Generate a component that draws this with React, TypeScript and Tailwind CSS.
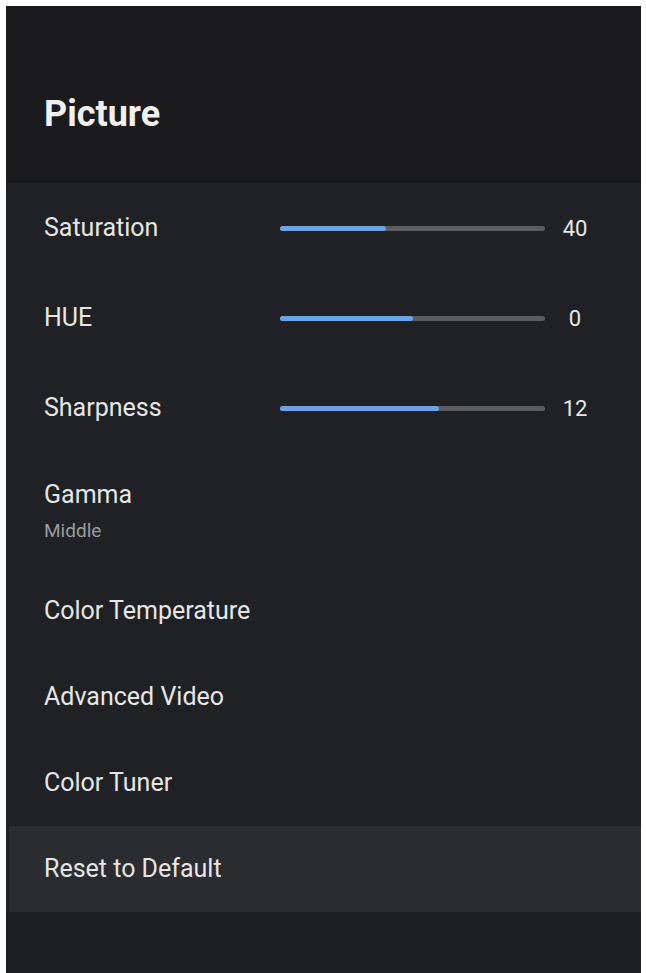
const sliders = [
  { label: 'Saturation', value: '40', fill: 40 },
  { label: 'HUE', value: '0', fill: 50 },
  { label: 'Sharpness', value: '12', fill: 60 },
];

const items = ['Color Temperature', 'Advanced Video', 'Color Tuner'];

function SliderRow({ label, value, fill }: { label: string; value: string; fill: number }) {
  return (
    <div className="flex h-[90px] items-center pl-[38px]">
      <span className="w-[236px] text-[25px] text-[#e6e6e6]">{label}</span>
      <div className="h-[5px] w-[265px] rounded-full bg-[#5a5c5f]">
        <div className="h-full rounded-full bg-[#6aa3e6]" style={{ width: `${fill}%` }} />
      </div>
      <span className="w-[60px] text-center text-[22px] text-[#e6e6e6]">{value}</span>
    </div>
  );
}

export default function App() {
  return (
    <div className="min-h-[973px] bg-white pl-[6px] pr-[5px] pt-[6px]" style={{ fontFamily: 'Roboto, "Noto Sans", sans-serif' }}>
      <div className="flex min-h-[967px] flex-col bg-[#1f2124]">
        <div className="h-[177px] bg-[#1b1b1e] pl-[38px] pt-[87px]">
          <h1 className="text-[36px] font-bold leading-[42px] text-[#f0f0f0]">Picture</h1>
        </div>

        {sliders.map((s) => (
          <SliderRow key={s.label} {...s} />
        ))}

        <div className="flex h-[115px] flex-col justify-center pl-[38px]">
          <span className="text-[25px] text-[#e6e6e6]">Gamma</span>
          <span className="mt-[4px] text-[19px] text-[#9b9c9e]">Middle</span>
        </div>

        {items.map((item) => (
          <div key={item} className="flex h-[86px] items-center pl-[38px] text-[25px] text-[#e6e6e6]">
            {item}
          </div>
        ))}

        <div className="ml-[3px] flex h-[86px] items-center bg-[#2a2c2f] pl-[35px] text-[25px] text-[#e6e6e6]">
          Reset to Default
        </div>

        <div className="flex-1 bg-[#1c1e21]" />
      </div>
    </div>
  );
}
